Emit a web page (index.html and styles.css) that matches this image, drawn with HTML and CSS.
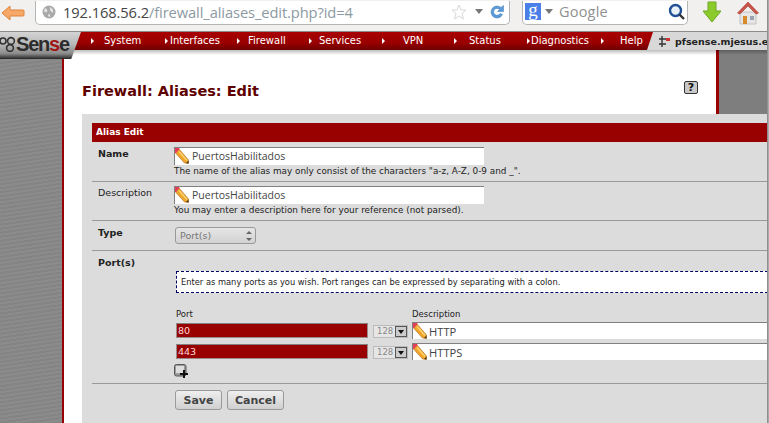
FILE: index.html
```html
<!DOCTYPE html>
<html lang="es">
<head>
<meta charset="utf-8">
<title>Firewall: Aliases: Edit</title>
<link rel="stylesheet" href="styles.css">
</head>
<body>
<svg width="0" height="0" class="defs">
  <symbol id="pencil" viewBox="0 0 14 16">
    <path d="M0.5 5 L4 1 L13.5 12 L13.5 15.5 L9.5 15 Z" fill="#f0a62a" stroke="#a8681c" stroke-width=".6"/>
    <path d="M0 0 H4.5 L4 1.5 L1 5 L0 5 Z" fill="#e43f5a"/>
    <path d="M4 3.5 L12 12.5" stroke="#ffd77a" stroke-width="1.2"/>
    <path d="M11 15 L13.5 15.5 L13.5 12.5 Z" fill="#4a3a2a"/>
  </symbol>
</svg>
<div class="page">
  <div class="window">
    <header class="toolbar">
      <svg class="back" width="24" height="16" viewBox="0 0 24 16"><path d="M1 8 L9 1 V5 H22 a1 1 0 0 1 1 1 V10 a1 1 0 0 1 -1 1 H9 V15 Z" fill="#f5a868" stroke="#de8238" stroke-width="1"/></svg>
      <div class="urlbar">
        <svg class="globe" width="14" height="14" viewBox="0 0 14 14"><circle cx="7" cy="7" r="6.5" fill="#a9a9a9"/><path d="M3 3 Q6 4 5 7 Q3 8 2 6 Z M8 2 Q12 4 11 8 Q9 7 8 5 Z M6 9 Q9 9 8 12 Q6 12 6 9 Z" fill="#e4e4e4"/></svg>
        <span class="url"><span class="host">192.168.56.2</span>/firewall_aliases_edit.php?id=4</span>
        <svg class="star" width="16" height="16" viewBox="0 0 16 16"><path d="M8 1 L10 6 L15 6 L11 9.5 L12.5 15 L8 12 L3.5 15 L5 9.5 L1 6 L6 6 Z" fill="#fff" stroke="#d8d8d8"/></svg>
        <span class="caret"></span>
        <svg class="reload" width="16" height="16" viewBox="0 0 16 16"><path d="M13.5 10.5 A6 6 0 1 1 12 3.5 L14.5 1.5 V7.5 H8.5 L10.5 5.5 A3.4 3.4 0 1 0 11 9.5 Z" fill="#5a9bd8" stroke="#3a78b5" stroke-width=".5"/></svg>
      </div>
      <div class="searchbar">
        <span class="gbadge">g</span>
        <span class="caret"></span>
        <span class="gtext">Google</span>
        <svg class="lens" width="18" height="18" viewBox="0 0 18 18"><circle cx="7.5" cy="7.5" r="5.5" fill="#e8f0fa" stroke="#1f4f94" stroke-width="2.4"/><path d="M11.5 11.5 L16 16" stroke="#333" stroke-width="2.4"/></svg>
      </div>
      <svg class="down" width="20" height="23" viewBox="0 0 20 23"><path d="M6 1 H14 V10 H19 L10 21 L1 10 H6 Z" fill="#8ccb2c" stroke="#6ca81e"/></svg>
      <svg class="home" width="22" height="24" viewBox="0 0 22 24"><path d="M3 11 H19 V23 H3 Z" fill="#e6e6e6" stroke="#aaa" stroke-width=".6"/><path d="M0.5 12 L11 1 L21.5 12 L19 13 L11 5 L3 13 Z" fill="#c9554a" stroke="#a83a30" stroke-width=".6"/><path d="M6 15 H10 V23 H6 Z" fill="#d98a2b"/><path d="M13 15 H17 V19 H13 Z" fill="#9aa3ad"/></svg>
    </header>

    <nav class="nav">
      <div class="logo">
        <svg class="logo-mark" width="16" height="16" viewBox="0 0 16 16"><circle cx="3" cy="5" r="3" fill="none" stroke="#333" stroke-width="1.6"/><circle cx="11" cy="5" r="3.4" fill="none" stroke="#333" stroke-width="1.6"/><circle cx="10" cy="12" r="3.4" fill="none" stroke="#333" stroke-width="1.6"/></svg>
        <span class="logo-text">Sen<span class="logo-s">s</span>e</span>
      </div>
      <ul class="menu">
        <li class="m1">System</li>
        <li class="m2">Interfaces</li>
        <li class="m3">Firewall</li>
        <li class="m4">Services</li>
        <li class="m5">VPN</li>
        <li class="m6">Status</li>
        <li class="m7">Diagnostics</li>
        <li class="m8">Help</li>
      </ul>
      <div class="hostname">
        <svg width="12" height="11" viewBox="0 0 12 11"><path d="M3 0 V11 M0 3 H7 M0 8 H7" stroke="#333" stroke-width="1.4"/><rect x="7" y="2" width="4" height="3" fill="#c33"/></svg>
        <span>pfsense.mjesus.e</span>
      </div>
    </nav>
    <div class="navshadow"></div>

    <div class="layout">
      <div class="side"></div>
      <main class="content">
        <div class="titlerow">
          <h1>Firewall: Aliases: Edit</h1>
          <span class="help">?</span>
        </div>
        <section class="panel">
          <div class="panel-title">Alias Edit</div>

          <div class="row row-name">
            <div class="lbl">Name</div>
            <div class="val">
              <div class="field field-main"><svg class="pen"><use href="#pencil"/></svg><span>PuertosHabilitados</span></div>
              <p class="hint">The name of the alias may only consist of the characters "a-z, A-Z, 0-9 and _".</p>
            </div>
          </div>

          <div class="row row-desc">
            <div class="lbl lbl-plain">Description</div>
            <div class="val">
              <div class="field field-main"><svg class="pen"><use href="#pencil"/></svg><span>PuertosHabilitados</span></div>
              <p class="hint">You may enter a description here for your reference (not parsed).</p>
            </div>
          </div>

          <div class="row row-type">
            <div class="lbl">Type</div>
            <div class="val">
              <div class="typesel"><span>Port(s)</span><span class="updown"><i class="up"></i><i class="dn"></i></span></div>
            </div>
          </div>

          <div class="row row-ports">
            <div class="lbl">Port(s)</div>
            <div class="val">
              <div class="infobox">Enter as many ports as you wish. Port ranges can be expressed by separating with a colon.</div>
              <div class="grid-ports">
                <div class="ph ph-port">Port</div>
                <div class="ph ph-desc">Description</div>

                <div class="portin">80</div>
                <div class="bits"><span>128</span><b></b></div>
                <div class="field field-desc"><svg class="pen"><use href="#pencil"/></svg><span>HTTP</span></div>

                <div class="portin">443</div>
                <div class="bits"><span>128</span><b></b></div>
                <div class="field field-desc"><svg class="pen"><use href="#pencil"/></svg><span>HTTPS</span></div>
              </div>
              <svg class="addbtn" width="14" height="14" viewBox="0 0 14 14"><rect x=".5" y=".5" width="11.5" height="11.5" rx="2" fill="#9c9c9c" stroke="#555"/><rect x="2" y="2" width="8" height="7" fill="#dedede"/><path d="M10 6 V14 M6 10 H14" stroke="#111" stroke-width="2"/></svg>
            </div>
          </div>

          <div class="row row-btn">
            <div class="lbl"></div>
            <div class="val btns">
              <button class="btn btn-save" type="button">Save</button>
              <button class="btn btn-cancel" type="button">Cancel</button>
            </div>
          </div>
        </section>
      </main>
      <div class="rest"></div>
    </div>
  </div>
  <div class="edge"></div>
</div>
</body>
</html>
```
FILE: styles.css
```css
* { box-sizing: border-box; }
html, body { margin: 0; padding: 0; }
body { background: #7e7e7e; font-family: "DejaVu Sans", sans-serif; font-size: 9px; color: #222; }
.defs { position: absolute; }
.page { width: 769px; height: 423px; overflow: hidden; display: flex; }
.window { width: 767px; height: 423px; flex: none; overflow: hidden; display: flex; flex-direction: column; }
.edge { flex: 1; background: #a8a8a8; border-left: 1px solid #8f8f8f; }

/* browser toolbar */
.toolbar { height: 32px; flex: none; background: #f1f0ee; display: flex; align-items: center; padding: 0 0 6px 1px; border-bottom: 1px solid #8b8b8b; }
.back { margin-right: 10px; margin-top: 1px; flex: none; }
.urlbar { width: 475px; height: 24px; flex: none; background: #fff; border: 1px solid #b5b5b5; border-top: 0; border-radius: 0 0 5px 5px; display: flex; align-items: center; padding: 0 4px 1px 6px; }
.globe { margin-right: 7px; flex: none; }
.url { font-family: "Open Sans", sans-serif; font-size: 14.7px; padding-top: 1px; color: #8d9aa3; white-space: nowrap; flex: 1; letter-spacing: -.1px; }
.host { color: #444; }
.star { margin-right: 8px; flex: none; }
.caret { width: 0; height: 0; flex: none; border: 4px solid transparent; border-top: 5px solid #777; border-bottom: 0; margin-right: 6px; }
.reload { flex: none; }
.searchbar { width: 166px; height: 24px; flex: none; margin-left: 12px; background: #fff; border: 1px solid #b5b5b5; border-top: 0; border-radius: 0 0 5px 5px; display: flex; align-items: center; padding: 0 1px 1px 2px; }
.searchbar .caret { margin-right: 8px; }
.gbadge { width: 16px; height: 17px; flex: none; background: #4a7fe8; color: #fff; font-family: "Liberation Serif", serif; font-size: 19px; line-height: 14px; text-align: center; margin-right: 4px; }
.gtext { font-family: "Open Sans", sans-serif; font-size: 14.5px; color: #8f8f8f; flex: 1; margin-left: -2px; letter-spacing: .2px; }
.lens { flex: none; }
.down { margin-left: 14px; flex: none; }
.home { margin-left: 15px; margin-top: 0; flex: none; }

/* nav */
.nav { height: 18px; flex: none; display: flex; background: linear-gradient(#a80000 0, #9a0000 60%, #6d0000 100%); position: relative; z-index: 3; }
.logo { width: 81px; height: 27px; flex: none; background: linear-gradient(#d4d4d4 0, #b8b8b8 45%, #8a8a8a 80%, #3a3a3a 96%, #222 100%); clip-path: polygon(0 0, 100% 0, 88% 100%, 0 100%); display: flex; padding: 3px 0 0 0; position: relative; z-index: 2; }
.logo-mark { flex: none; margin-top: 1px; }
.logo-text { font-family: "Liberation Sans", sans-serif; font-weight: 700; font-size: 20px; line-height: 19px; color: #2c2c2c; letter-spacing: -1.2px; }
.logo-s { color: #a01818; }
.menu { list-style: none; margin: 0; padding: 0; display: flex; flex: 1; height: 18px; color: #fff; font-size: 10px; line-height: 17px; white-space: nowrap; }
.menu li { position: relative; flex: none; }
.menu li::before { content: ""; position: absolute; top: 6px; width: 0; height: 0; border: 3px solid transparent; border-left: 3px solid #fff; border-right: 0; }
.m1 { width: 81px; padding-left: 23px; }
.m1::before { left: 10px; }
.m2 { width: 72px; padding-left: 8px; }
.m2::before { left: 3px; }
.m3 { width: 81px; padding-left: 14px; }
.m3::before { left: 3px; }
.m4 { width: 70px; padding-left: 4px; }
.m4::before { left: -6px; }
.m5 { width: 66px; padding-left: 18px; }
.m5::before { left: -3px; }
.m6 { width: 73px; padding-left: 18px; }
.m6::before { left: 3px; }
.m7 { width: 73px; padding-left: 7px; }
.m7::before { left: 3px; }
.m8 { width: 50px; padding-left: 23px; }
.m8::before { left: 4px; }
.hostname { width: 120px; flex: none; background: #d8d8d8; clip-path: polygon(6px 0, 100% 0, 100% 100%, 0 100%); font-size: 9.5px; font-weight: 700; color: #222; display: flex; align-items: center; gap: 4px; padding-left: 12px; white-space: nowrap; overflow: hidden; }
.hostname svg { flex: none; }
.navshadow { height: 5px; flex: none; margin-bottom: -5px; position: relative; z-index: 2; background: linear-gradient(rgba(0,0,0,.26), rgba(0,0,0,0)); }

/* layout */
.layout { flex: 1; display: flex; min-height: 0; }
.side { width: 62px; flex: none; background: repeating-linear-gradient(172deg, #848484 0, #848484 2px, #8b8b8b 2px, #8b8b8b 4px); }
.content { width: 657px; flex: none; background: #fff; border-left: 2px solid #990000; border-right: 3px solid #990000; padding: 0 0 0 18px; position: relative; z-index: 1; }
.rest { flex: 1; background: #7e7e7e; }

.titlerow { height: 64px; padding-top: 32px; position: relative; }
h1 { margin: 0; font-size: 14.5px; line-height: 18px; font-weight: 700; color: #5f0000; white-space: nowrap; }
.help { position: absolute; left: 602px; top: 31px; width: 14px; height: 13px; border: 1px solid #333; border-radius: 2px; background: #c8c8c8; color: #111; font-size: 11px; font-weight: 700; line-height: 11px; text-align: center; }

/* panel */
.panel { width: 685px; height: 400px; background: #dcdcdc; padding: 9px 0 0 10px; }
.panel-title { height: 19px; background: #990000; color: #fff; font-size: 9px; font-weight: 700; line-height: 18px; padding-left: 4px; }
.row { display: flex; border-bottom: 1px solid #999; }
.row-name { height: 40px; }
.row-desc { height: 39px; }
.row-type { height: 30px; }
.row-ports { height: 133px; }
.row-btn { border-bottom: 0; }
.lbl { width: 82px; flex: none; padding: 6px 0 0 6px; font-size: 9.5px; font-weight: 700; color: #222; line-height: 12px; }
.lbl-plain { font-weight: 400; padding-top: 5px; }
.val { flex: 1; min-width: 0; }

.field { display: flex; align-items: center; background: #fff; border-top: 1px solid #808080; border-left: 1px solid #808080; font-family: "Open Sans", sans-serif; color: #444; font-size: 10.5px; overflow: hidden; white-space: nowrap; }
.pen { width: 14px; height: 16px; flex: none; margin: 0 3px 0 0; }
.field-main { width: 310px; height: 18px; margin-top: 5px; padding-bottom: 1px; }
.row-desc .field-main { margin-top: 4px; }
.hint { margin: 0; font-size: 8.85px; line-height: 12px; color: #222; white-space: nowrap; }

.typesel { width: 81px; height: 17px; margin: 6px 0 0 1px; border: 1px solid #999; border-radius: 3px; background: linear-gradient(#e6e6e6, #d2d2d2); color: #777; font-size: 9.5px; line-height: 15px; padding-left: 4px; display: flex; justify-content: space-between; }
.updown { width: 13px; display: flex; flex-direction: column; align-items: center; justify-content: center; gap: 4px; }
.updown i { width: 0; height: 0; border: 3px solid transparent; }
.updown .up { border-bottom: 3px solid #666; border-top: 0; }
.updown .dn { border-top: 3px solid #666; border-bottom: 0; }

.infobox { width: 592px; height: 22px; margin: 20px 0 0 2px; background: #fff; border: 1px dashed #000066; border-right: 0; font-size: 8.3px; line-height: 20px; padding-left: 4px; color: #222; white-space: nowrap; }
.grid-ports { display: grid; grid-template-columns: 197px 39px 355px; grid-template-rows: 14px 21px 21px; margin: 15px 0 0 2px; align-items: start; }
.ph { font-size: 8.5px; line-height: 12px; }
.ph-desc { grid-column: 3; }
.portin { width: 192px; height: 15px; margin-top: 1px; background: #990000; border: 1px solid #9a8a8a; border-top-color: #808080; color: #ffd8d8; font-size: 9.5px; line-height: 14px; padding-left: 1px; }
.bits { width: 35px; height: 13px; margin-top: 3px; background: #e6e6e6; border: 1px solid #bbb; color: #888; font-size: 8.5px; line-height: 11px; padding-left: 3px; position: relative; }
.bits b { position: absolute; right: 0; top: 0; width: 12px; height: 11px; background: #ccc; border: 1px solid #555; }
.bits b::after { content: ""; position: absolute; left: 2px; top: 3px; border: 3px solid transparent; border-top: 4px solid #111; border-bottom: 0; }
.field-desc { height: 17px; font-size: 11.2px; }
.field-desc .pen { margin-right: 2px; }
.addbtn { display: block; margin-top: 0; }

.btns { display: flex; gap: 5px; padding: 6px 0 0 1px; }
.btn { height: 20px; border: 1px solid #999; border-radius: 3px; background: linear-gradient(#eee, #d0d0d0); color: #444; font-family: "DejaVu Sans", sans-serif; font-size: 11px; font-weight: 700; padding: 0; }
.btn-save { width: 47px; }
.btn-cancel { width: 57px; }
```
